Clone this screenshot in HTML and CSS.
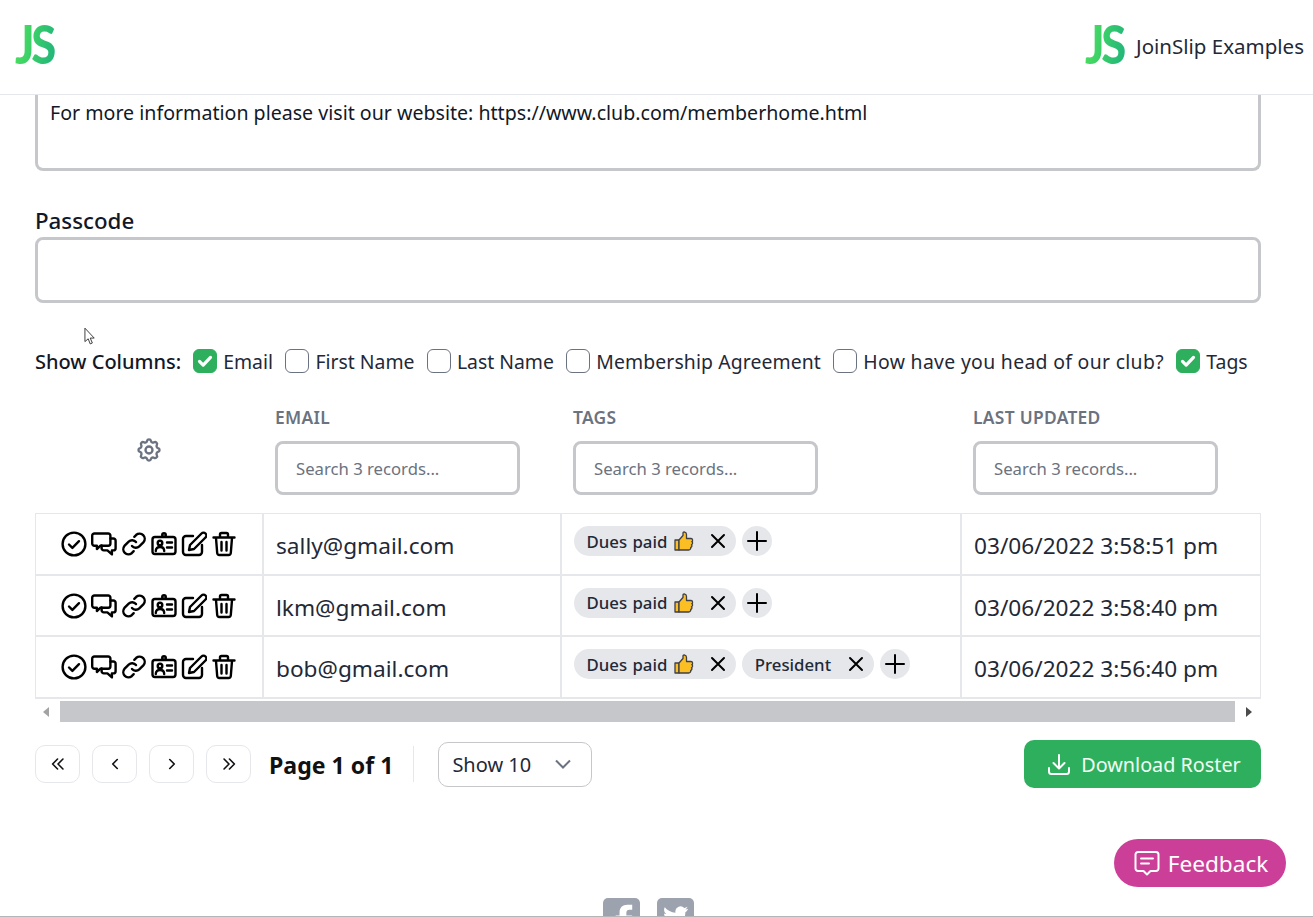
FILE: index.html
```html
<!DOCTYPE html>
<html lang="en">
<head>
<meta charset="utf-8">
<title>JoinSlip Examples</title>
<link rel="stylesheet" href="styles.css">
</head>
<body>
<svg class="defs" width="0" height="0" aria-hidden="true">
  <symbol id="i-check" viewBox="0 0 26 26"><circle cx="13" cy="13" r="11.4"/><path d="M8 13.500l3.400 3.400L18 10.200"/></symbol>
  <symbol id="i-chat" viewBox="0 0 26 26"><path d="M3.400 2.500h13.800a2.200 2.200 0 0 1 2.200 2.200v7.800a2.200 2.200 0 0 1-2.200 2.200H9.500l-3.600 3.300v-3.300H3.400a2.200 2.200 0 0 1-2.200-2.200V4.700a2.200 2.200 0 0 1 2.200-2.200z"/><path d="M19.500 7.500h2.900a2.200 2.200 0 0 1 2.200 2.200v7.500a2.200 2.200 0 0 1-2.200 2.200h-1.500v4l-4.500-4h-3.600a2.200 2.200 0 0 1-2.200-2.200v-2.700"/></symbol>
  <symbol id="i-link" viewBox="0 0 26 26"><path d="M11 15a5 5 0 0 0 7.300.4l4.300-4.300a5.200 5.200 0 0 0-7.300-7.300l-2 2"/><path d="M15 11a5 5 0 0 0-7.300-.4l-4.300 4.300a5.200 5.200 0 0 0 7.300 7.300l2-2"/></symbol>
  <symbol id="i-card" viewBox="0 0 26 26"><rect x="1.500" y="6" width="23" height="17" rx="2.500"/><circle cx="13" cy="4" r="1.800"/><circle cx="9" cy="12" r="2.300"/><path d="M4.800 20c0-2.800 1.800-4 4.200-4s4.200 1.200 4.200 4M16 11.500h5M16 16.500h5"/></symbol>
  <symbol id="i-edit" viewBox="0 0 26 26"><path d="M12 5H5a3 3 0 0 0-3 3v13a3 3 0 0 0 3 3h13a3 3 0 0 0 3-3v-7"/><path d="M20.500 2.500a2.800 2.800 0 0 1 4 4L13 18l-5 1 1-5z"/></symbol>
  <symbol id="i-trash" viewBox="0 0 26 26"><path d="M2.500 6.500h21M9 6V3.500A1.500 1.500 0 0 1 10.500 2h5A1.500 1.500 0 0 1 17 3.500V6M5 7l1.200 15a2.200 2.200 0 0 0 2.200 2h9.200a2.200 2.200 0 0 0 2.200-2L21 7M10.500 11v8.500M15.500 11v8.500"/></symbol>
  <symbol id="i-x" viewBox="0 0 20 20"><path d="M4 4l12 12M16 4L4 16"/></symbol>
  <symbol id="i-plus" viewBox="0 0 20 20"><path d="M10 1v18M1 10h18"/></symbol>
  <symbol id="i-thumb" viewBox="0 0 20 20"><path class="thumb" d="M1 9h4v10H1z"/><path class="thumb" d="M5 9l4-4.500V2c0-1.500 3.500-1.500 3.500 1.500V7.500h4.500c2 0 2 3 .8 3.200 1.200.5 1 2.800-.3 3 .8.800.4 2.500-.8 2.800.3 1.200-.6 2.500-2 2.500H5z"/></symbol>
</svg>

<div class="page">
  <header class="topbar">
    <span class="logo-box"><span class="logo">JS</span></span>
    <div class="brand">
      <span class="logo-box"><span class="logo">JS</span></span>
      <span class="brand-name">JoinSlip Examples</span>
    </div>
  </header>

  <main class="content">
    <div class="textarea-box">For more information please visit our website: https://www.club.com/memberhome.html</div>

    <label class="field-label">Passcode</label>
    <div class="passcode-box"></div>

    <svg class="cursor" viewBox="0 0 14 20"><path d="M1 1v14.500l3.500-3 2.200 5.500 2.300-1-2.300-5.300H11z"/></svg>

    <div class="columns-row">
      <span class="columns-title">Show Columns:</span>
      <span class="opt"><span class="cb on"><svg viewBox="0 0 24 24"><path d="M6 12.500l4 4 8-8.500"/></svg></span>Email</span>
      <span class="opt"><span class="cb"></span>First Name</span>
      <span class="opt"><span class="cb"></span>Last Name</span>
      <span class="opt mid"><span class="cb"></span>Membership Agreement</span>
      <span class="opt wide"><span class="cb"></span>How have you head of our club?</span>
      <span class="opt"><span class="cb on"><svg viewBox="0 0 24 24"><path d="M6 12.500l4 4 8-8.500"/></svg></span>Tags</span>
    </div>

    <div class="grid-head">
      <div class="head-gear">
        <svg viewBox="0 0 24 24" class="gear"><path d="M10.300 4.300c.4-1.800 3-1.800 3.400 0a1.700 1.700 0 0 0 2.600 1.100c1.500-.9 3.300.8 2.400 2.400a1.700 1.700 0 0 0 1 2.500c1.800.4 1.800 3 0 3.400a1.700 1.700 0 0 0-1 2.600c.9 1.500-.9 3.300-2.400 2.400a1.700 1.700 0 0 0-2.600 1c-.4 1.800-3 1.800-3.400 0a1.700 1.700 0 0 0-2.600-1c-1.500.9-3.300-.9-2.400-2.400a1.700 1.700 0 0 0-1-2.600c-1.800-.4-1.800-3 0-3.400a1.700 1.700 0 0 0 1-2.500c-.9-1.600.9-3.300 2.400-2.400a1.700 1.700 0 0 0 2.600-1.100z"/><circle cx="12" cy="12" r="3"/></svg>
      </div>
      <div class="head-col"><div class="head-label">EMAIL</div><div class="search">Search 3 records...</div></div>
      <div class="head-col"><div class="head-label">TAGS</div><div class="search">Search 3 records...</div></div>
      <div class="head-col"><div class="head-label">LAST UPDATED</div><div class="search">Search 3 records...</div></div>
    </div>

    <div class="grid-body">
      <div class="row">
        <div class="cell actions">
          <svg class="ic"><use href="#i-check"/></svg><svg class="ic"><use href="#i-chat"/></svg><svg class="ic"><use href="#i-link"/></svg><svg class="ic"><use href="#i-card"/></svg><svg class="ic"><use href="#i-edit"/></svg><svg class="ic"><use href="#i-trash"/></svg>
        </div>
        <div class="cell text">sally@gmail.com</div>
        <div class="cell tags">
          <span class="tag spaced">Dues paid <svg class="thumb-ic"><use href="#i-thumb"/></svg><svg class="x"><use href="#i-x"/></svg></span>
          <span class="add"><svg><use href="#i-plus"/></svg></span>
        </div>
        <div class="cell text">03/06/2022 3:58:51 pm</div>
      </div>
      <div class="row">
        <div class="cell actions">
          <svg class="ic"><use href="#i-check"/></svg><svg class="ic"><use href="#i-chat"/></svg><svg class="ic"><use href="#i-link"/></svg><svg class="ic"><use href="#i-card"/></svg><svg class="ic"><use href="#i-edit"/></svg><svg class="ic"><use href="#i-trash"/></svg>
        </div>
        <div class="cell text">lkm@gmail.com</div>
        <div class="cell tags">
          <span class="tag spaced">Dues paid <svg class="thumb-ic"><use href="#i-thumb"/></svg><svg class="x"><use href="#i-x"/></svg></span>
          <span class="add"><svg><use href="#i-plus"/></svg></span>
        </div>
        <div class="cell text">03/06/2022 3:58:40 pm</div>
      </div>
      <div class="row">
        <div class="cell actions">
          <svg class="ic"><use href="#i-check"/></svg><svg class="ic"><use href="#i-chat"/></svg><svg class="ic"><use href="#i-link"/></svg><svg class="ic"><use href="#i-card"/></svg><svg class="ic"><use href="#i-edit"/></svg><svg class="ic"><use href="#i-trash"/></svg>
        </div>
        <div class="cell text">bob@gmail.com</div>
        <div class="cell tags">
          <span class="tag spaced">Dues paid <svg class="thumb-ic"><use href="#i-thumb"/></svg><svg class="x"><use href="#i-x"/></svg></span>
          <span class="tag">President<svg class="x"><use href="#i-x"/></svg></span>
          <span class="add"><svg><use href="#i-plus"/></svg></span>
        </div>
        <div class="cell text">03/06/2022 3:56:40 pm</div>
      </div>
    </div>

    <div class="hscroll">
      <span class="arrow left"></span>
      <span class="thumb-bar"></span>
      <span class="arrow right"></span>
    </div>

    <div class="pager">
      <span class="pg"><svg viewBox="0 0 20 20"><path d="M9.500 4.500L4 10l5.500 5.500M15.500 4.500L10 10l5.500 5.500"/></svg></span>
      <span class="pg"><svg viewBox="0 0 20 20"><path d="M12.500 5l-5 5 5 5"/></svg></span>
      <span class="pg"><svg viewBox="0 0 20 20"><path d="M7.500 5l5 5-5 5"/></svg></span>
      <span class="pg"><svg viewBox="0 0 20 20"><path d="M4.500 4.500L10 10l-5.500 5.500M10.500 4.500L16 10l-5.500 5.500"/></svg></span>
      <span class="page-no">Page 1 of 1</span>
      <span class="divider"></span>
      <span class="select">Show 10<svg viewBox="0 0 20 20"><path d="M3 6.500l7 7 7-7"/></svg></span>
      <span class="download"><svg viewBox="0 0 24 24"><path d="M12 3v13M6.500 11l5.500 5.500 5.500-5.500M2 16v3.500A2.500 2.500 0 0 0 4.500 22h15a2.500 2.500 0 0 0 2.500-2.500V16"/></svg>Download Roster</span>
    </div>

    <div class="feedback-row">
      <span class="feedback"><svg viewBox="0 0 26 26"><path d="M4 2h18a2.500 2.500 0 0 1 2.500 2.500v14A2.500 2.500 0 0 1 22 21h-5.500L13 24.500 9.500 21H4a2.500 2.500 0 0 1-2.500-2.500v-14A2.500 2.500 0 0 1 4 2zM7 8.500h12M7 13.500h8"/></svg>Feedback</span>
    </div>

    <div class="socials">
      <span class="social"><svg viewBox="0 0 38 38"><path d="M24 38V24h5l1-6h-6v-3c0-2 1-3 3-3h3V7h-5c-5 0-8 3-8 8v3h-4v6h4v14z"/></svg></span>
      <span class="social"><svg viewBox="0 0 38 38"><path d="M32 11c-1 .5-2 .7-3 .9 1-.7 2-1.700 2.300-2.900-1 .6-2.200 1-3.300 1.300a5.300 5.300 0 0 0-9 4.800C14.600 14.900 10.700 12.800 8 9.500c-1.400 2.400-.7 5.500 1.600 7-.9 0-1.700-.3-2.400-.7 0 2.600 1.800 4.800 4.300 5.300-.8.200-1.600.2-2.400.1.700 2.100 2.700 3.600 5 3.700-2.300 1.800-5.200 2.600-8 2.300 8 5 23 2 23-12.500 1-.7 2-1.700 2.900-3.700z"/></svg></span>
    </div>
  </main>
</div>
</body>
</html>
```

FILE: styles.css
```css
* { box-sizing: border-box; }
html, body { margin: 0; padding: 0; background: #fff; overflow: hidden; }
body { font-family: "Noto Sans", "Open Sans", sans-serif; color: #111827; }
.defs { position: absolute; }

.page { width: 1313px; height: 917px; display: flex; flex-direction: column; overflow: hidden; border-bottom: 1px solid #b5b5b8; }

.topbar { flex: none; height: 95px; border-bottom: 1px solid #e5e7eb; display: flex; align-items: center; justify-content: space-between; padding: 0 9px 4px 15px; }
.logo-box { display: inline-block; width: 40px; height: 52px; overflow: visible; }
.logo { font-family: "Lato", sans-serif; font-size: 54px; line-height: 50px; font-weight: 900; letter-spacing: -4px; background: linear-gradient(100deg, #4ade60 10%, #22b57a 95%); -webkit-background-clip: text; background-clip: text; color: transparent; display: inline-block; padding-right: 4px; transform: scaleX(.84); transform-origin: left center; }
.brand { display: flex; align-items: center; gap: 11px; }
.brand-name { font-size: 20.500px; color: #1f2937; margin-top: 2px; }

.content { position: relative; flex: 1; min-height: 0; overflow: hidden; padding: 0 52px 0 35px; }
.cursor { position: absolute; left: 84px; top: 232px; width: 13px; height: 19px; fill: #fff; stroke: #333; stroke-width: 1; }

.textarea-box { height: 76px; border: 3px solid #c6c7cb; border-top: 0; border-radius: 0 0 8px 8px; padding: 4px 12px; font-size: 19.600px; line-height: 28px; color: #111827; }

.field-label { display: block; margin-top: 36px; font-size: 22.300px; font-weight: 500; line-height: 28px; color: #111827; }
.passcode-box { height: 66px; margin-top: 2px; border: 3px solid #c6c7cb; border-radius: 8px; }

.columns-row { display: flex; align-items: center; margin-top: 43px; height: 30px; font-size: 19.400px; white-space: nowrap; }
.columns-title { margin-right: 12px; font-weight: 500; font-size: 20px; }
.opt { display: inline-flex; align-items: center; margin-right: 12.400px; color: #1f2937; }
.opt.mid { letter-spacing: .1px; }
.opt.wide { letter-spacing: .32px; }
.cb { width: 24px; height: 24px; border: 1px solid #6b7280; border-radius: 6px; margin-right: 6px; display: inline-flex; align-items: center; justify-content: center; }
.cb.on { background: #2eaf5d; border-color: #2eaf5d; }
.cb svg { width: 22px; height: 22px; fill: none; stroke: #fff; stroke-width: 3.500; stroke-linecap: round; stroke-linejoin: round; }

.grid-head { display: grid; grid-template-columns: 228px 298px 400px 300px; margin-top: 29px; height: 108px; }
.head-gear { display: flex; justify-content: center; padding-top: 31px; }
.gear { width: 28px; height: 28px; fill: none; stroke: #6b7280; stroke-width: 2; }
.head-col { padding-left: 12px; }
.head-label { font-size: 17.400px; letter-spacing: .3px; line-height: 24px; font-weight: 600; color: #6b7280; }
.search { margin-top: 12px; width: 245px; height: 54px; border: 3px solid #c6c7cb; border-radius: 8px; padding-left: 18px; font-size: 16.700px; line-height: 50px; color: #6b7280; }

.grid-body { border: 1px solid #e5e7eb; border-bottom-width: 2px; }
.row { display: grid; grid-template-columns: 228px 298px 400px 298px; height: 61px; border-bottom: 2px solid #e5e7eb; }
.row:first-child { height: 62px; }
.row:last-child { border-bottom: 0; height: 60px; }
.cell { display: flex; align-items: center; border-right: 2px solid #e5e7eb; }
.cell:last-child { border-right: 0; }
.actions { justify-content: center; }
.ic { width: 26px; height: 26px; margin: 0 2px; fill: none; stroke: #000; stroke-width: 2.400; stroke-linecap: round; stroke-linejoin: round; }
.text { padding-left: 12px; font-size: 22.650px; color: #1f2937; padding-top: 3px; }
.tags { padding: 0 0 6px 12px; gap: 6px; }
.tag { display: inline-flex; align-items: center; height: 30px; padding: 0 8px 0 12.500px; border-radius: 15px; background: #e5e7eb; font-size: 16.800px; font-weight: 500; color: #1f2937; white-space: pre; }
.tag.spaced { word-spacing: 1px; }
.thumb-ic { width: 20px; height: 20px; margin-left: 1px; fill: #fbbf24; stroke: #3f3f46; stroke-width: 1.300; stroke-linejoin: round; }
.x { width: 20px; height: 20px; margin-left: 14.500px; fill: none; stroke: #000; stroke-width: 2; stroke-linecap: round; }
.add { width: 30px; height: 30px; border-radius: 50%; background: #e5e7eb; display: inline-flex; align-items: center; justify-content: center; }
.add svg { width: 20px; height: 20px; fill: none; stroke: #000; stroke-width: 2; stroke-linecap: round; }

.hscroll { display: flex; align-items: center; height: 21px; margin-top: 2px; }
.arrow { width: 0; height: 0; border-top: 5.500px solid transparent; border-bottom: 5.500px solid transparent; }
.arrow.left { margin-left: 8px; border-right: 6px solid #a3a3a3; }
.thumb-bar { height: 21px; width: 1175px; margin-left: 11px; background: #c6c7cb; }
.arrow.right { margin-left: 11px; border-left: 6px solid #4b4b4b; }

.pager { display: flex; align-items: center; margin-top: 19px; height: 46px; }
.pg { width: 45px; height: 38px; margin-right: 12px; border: 1px solid #e5e7eb; border-radius: 10px; display: inline-flex; align-items: center; justify-content: center; }
.pg svg { width: 18px; height: 18px; fill: none; stroke: #111; stroke-width: 1.800; stroke-linecap: round; stroke-linejoin: round; }
.page-no { font-size: 23.100px; font-weight: 700; margin-left: 6px; padding-top: 2px; color: #111; }
.divider { width: 1px; height: 36px; background: #e5e7eb; margin: 0 24px 0 20px; }
.select { width: 154px; height: 45px; border: 1px solid #c6c7cb; border-radius: 10px; display: inline-flex; align-items: center; justify-content: space-between; padding: 0 18px 0 13px; font-size: 20px; color: #1f2937; }
.select svg { width: 20px; height: 20px; fill: none; stroke: #6b7280; stroke-width: 2; }
.download { margin-left: auto; height: 48px; width: 237px; border-radius: 10px; background: #2eaf5d; color: #f0fdf4; display: inline-flex; align-items: center; justify-content: center; gap: 10px; padding-left: 3px; font-size: 19.800px; }
.download svg { width: 24px; height: 24px; fill: none; stroke: #fff; stroke-width: 2; stroke-linecap: round; stroke-linejoin: round; }

.feedback-row { display: flex; justify-content: flex-end; margin: 52px -25px 0 0; }
.feedback { height: 48px; width: 172px; border-radius: 24px; background: #cc3f99; color: #fff; display: inline-flex; align-items: center; justify-content: center; gap: 8px; padding-left: 2px; font-size: 22.600px; }
.feedback svg { width: 26px; height: 26px; fill: none; stroke: #fff; stroke-width: 2; stroke-linejoin: round; stroke-linecap: round; }

.socials { display: flex; justify-content: center; gap: 17px; margin-top: 11px; }
.social { width: 37px; height: 37px; border-radius: 5px; background: #9ca3af; display: inline-flex; }
.social svg { width: 37px; height: 37px; fill: #fff; }
.thumb { fill: #fbbf24; }
```
